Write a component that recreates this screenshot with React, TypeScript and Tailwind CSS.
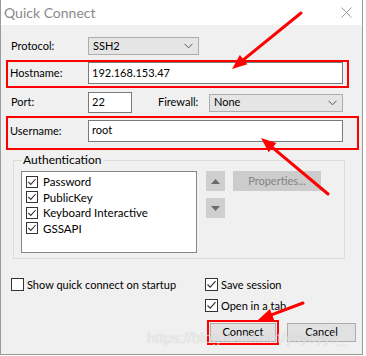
import React from 'react';

const font = { fontFamily: 'Lato, "Noto Sans", Arial, sans-serif' };

const Check = ({ checked, size = 13 }: { checked?: boolean; size?: number }) => (
  <span
    className="flex shrink-0 items-center justify-center border border-[#333333] bg-white"
    style={{ width: size, height: size }}
  >
    {checked && (
      <svg width={size - 2} height={size - 2} viewBox="0 0 11 11">
        <path d="M1.5 5.5 L4.2 8.2 L9.5 2.2" fill="none" stroke="#333" strokeWidth="1.2" />
      </svg>
    )}
  </span>
);

const Chevron = () => (
  <svg width="9" height="6" viewBox="0 0 9 6">
    <path d="M0.5 0.8 L4.5 4.8 L8.5 0.8" fill="none" stroke="#555" strokeWidth="1" />
  </svg>
);

// arrowhead triangle from tail -> tip
const arrowHead = (x1: number, y1: number, x2: number, y2: number) => {
  const dx = x2 - x1;
  const dy = y2 - y1;
  const len = Math.hypot(dx, dy);
  const ux = dx / len;
  const uy = dy / len;
  const bx = x2 - ux * 15;
  const by = y2 - uy * 15;
  const px = -uy * 6;
  const py = ux * 6;
  return `${x2},${y2} ${bx + px},${by + py} ${bx - px},${by - py}`;
};

const arrows = [
  [301, 13, 232, 69],
  [328, 194, 261, 138],
  [303, 303, 258, 320],
];

export default function App() {
  return (
    <div className="relative h-[356px] w-[366px] overflow-hidden bg-white text-[11px] text-black" style={font}>
      <div className="flex h-[355px] w-[363px] flex-col border-l border-r border-b border-[#9a9a9a]">
        {/* title bar */}
        <div className="flex h-[25px] items-center justify-between bg-white pl-[3px] pr-[10px]">
          <span className="text-[14px] text-[#8a8a8a]">Quick Connect</span>
          <svg width="11" height="11" viewBox="0 0 11 11">
            <path d="M0.5 0.5 L10.5 10.5 M10.5 0.5 L0.5 10.5" stroke="#9a9a9a" strokeWidth="1" />
          </svg>
        </div>

        <div className="flex flex-1 flex-col bg-[#f0f0f0] pl-[5px]">
          {/* protocol */}
          <div className="mt-[12px] flex h-[18px] items-center">
            <span className="w-[82px] pl-[5px]">Protocol:</span>
            <div className="flex h-[18px] w-[111px] items-center justify-between border border-[#adadad] bg-[#e5e5e5] pl-[4px] pr-[5px]">
              <span>SSH2</span>
              <Chevron />
            </div>
          </div>

          {/* hostname */}
          <div className="mt-[5px] flex h-[28px] w-[343px] items-start border-2 border-[#ff0000] pl-[2px]">
            <span className="flex h-[22px] w-[78px] items-center">Hostname:</span>
            <div className="flex h-[22px] w-[255px] items-center border border-[#7a7a7a] bg-white pl-[3px]">
              192.168.153.47
            </div>
          </div>

          {/* port / firewall */}
          <div className="mt-[4px] flex h-[21px] items-center">
            <span className="w-[82px] pl-[5px]">Port:</span>
            <div className="flex h-[21px] w-[44px] items-start border border-[#7a7a7a] bg-white pl-[3px] pt-[1px]">22</div>
            <span className="ml-[26px] w-[51px]">Firewall:</span>
            <div className="flex h-[18px] w-[134px] items-center justify-between border border-[#adadad] bg-[#e5e5e5] pl-[4px] pr-[5px]">
              <span>None</span>
              <Chevron />
            </div>
          </div>

          {/* username */}
          <div className="mt-[3px] flex h-[34px] w-[353px] items-start border-2 border-[#ff0000] pl-[2px] pt-[2px]">
            <span className="flex h-[22px] w-[78px] items-center">Username:</span>
            <div className="flex h-[22px] w-[255px] items-start border border-[#7a7a7a] bg-white pl-[3px] pt-[1px]">
              root
            </div>
          </div>

          {/* authentication */}
          <fieldset className="ml-[7px] mt-[3px] h-[106px] w-[332px] border border-[#dcdcdc] px-[7px] pb-[5px]">
            <legend className="ml-[1px] px-[1px] text-[12px] leading-[14px]">Authentication</legend>
            <div className="mt-[4px] flex items-start">
              <div className="flex h-[82px] w-[176px] flex-col border border-[#828790] bg-white pl-[4px] pt-[2px]">
                {['Password', 'PublicKey', 'Keyboard Interactive', 'GSSAPI'].map((label) => (
                  <div key={label} className="flex h-[15.5px] items-center gap-[5px]">
                    <Check checked size={12} />
                    <span className="text-[11.5px]">{label}</span>
                  </div>
                ))}
              </div>
              <div className="ml-[9px] flex flex-col gap-[7px]">
                <div className="flex h-[20px] w-[19px] items-center justify-center bg-[#cfcfcf]">
                  <svg width="9" height="5" viewBox="0 0 9 5"><path d="M0 5 L4.5 0 L9 5 Z" fill="#6a6a6a" /></svg>
                </div>
                <div className="flex h-[20px] w-[19px] items-center justify-center bg-[#cfcfcf]">
                  <svg width="9" height="5" viewBox="0 0 9 5"><path d="M0 0 L4.5 5 L9 0 Z" fill="#6a6a6a" /></svg>
                </div>
              </div>
              <div className="ml-[8px] flex h-[20px] w-[88px] items-center justify-center bg-[#cccccc] text-[#838383]">
                Properties...
              </div>
            </div>
          </fieldset>

          {/* options */}
          <div className="mt-[19px] flex items-start">
            <label className="flex w-[199px] items-center gap-[3px] pl-[5px]">
              <Check />
              <span className="leading-[13px]">Show quick connect on startup</span>
            </label>
            <div className="flex flex-col gap-[8px]">
              <label className="flex items-center gap-[3px]">
                <Check checked />
                <span className="leading-[13px]">Save session</span>
              </label>
              <label className="flex items-center gap-[3px]">
                <Check checked />
                <span className="leading-[13px]">Open in a tab</span>
              </label>
            </div>
          </div>

          {/* buttons */}
          <div className="mt-[8px] flex items-center pl-[201px]">
            <div className="flex h-[25px] w-[72px] items-center justify-center border-2 border-[#ff0000]">
              <button className="h-[19px] w-[66px] border border-[#adadad] bg-[#e1e1e1]">Connect</button>
            </div>
            <button className="ml-[8px] h-[19px] w-[69px] border border-[#adadad] bg-[#e1e1e1]">Cancel</button>
          </div>
        </div>
      </div>

      {/* watermark */}
      <span
        className="pointer-events-none absolute left-[147px] top-[327px] text-[15px] text-[#ffffff]/60"
        style={{ fontFamily: '"Liberation Sans", Arial, sans-serif', textShadow: '0 0 1px rgba(0,0,0,0.2)' }}
      >
        https://blog.csdn.net/ycycyyc_
      </span>

      {/* annotation arrows */}
      <svg className="pointer-events-none absolute left-0 top-0" width="366" height="356">
        {arrows.map(([x1, y1, x2, y2], i) => (
          <g key={i}>
            <line x1={x1} y1={y1} x2={x2 + (x1 - x2) * 0.15} y2={y2 + (y1 - y2) * 0.15} stroke="#ff0000" strokeWidth="3" strokeLinecap="round" />
            <polygon points={arrowHead(x1, y1, x2, y2)} fill="#ff0000" />
          </g>
        ))}
      </svg>
    </div>
  );
}
